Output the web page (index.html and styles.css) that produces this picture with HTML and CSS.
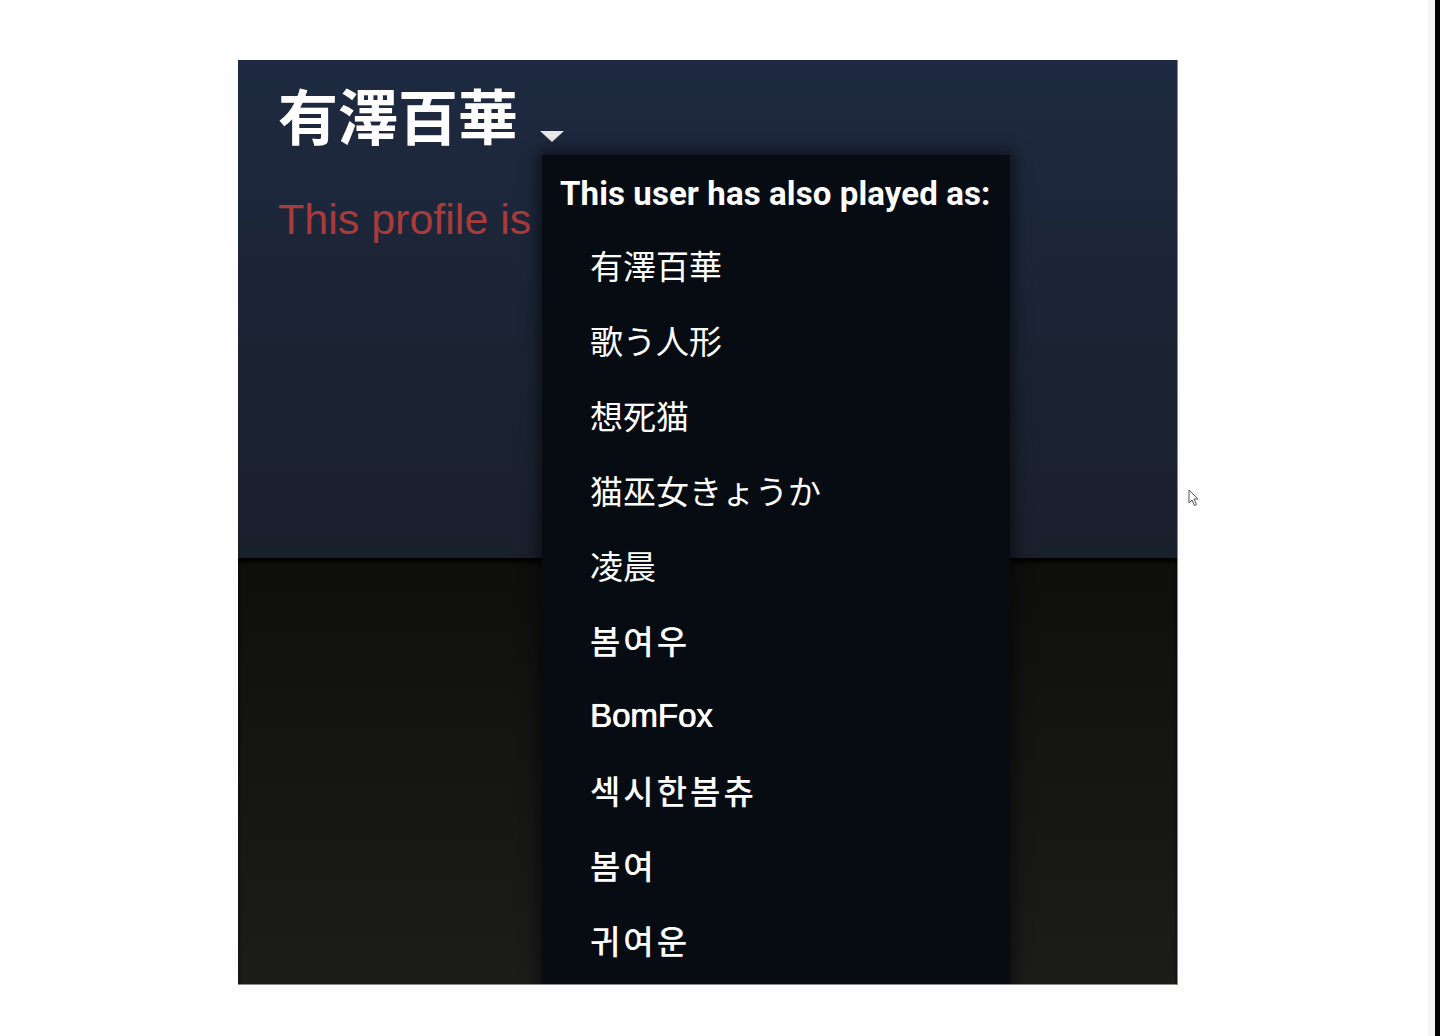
FILE: index.html
```html
<!DOCTYPE html>
<html lang="en">
<head>
    <meta charset="UTF-8">
    <meta name="viewport" content="width=device-width, initial-scale=1.0">
    <title>Profile</title>
    <link rel="stylesheet" href="styles.css">
</head>
<body>

    <div class="page">
        <div class="profile">
            <!-- Header with persona name -->
            <div class="profile-header">
                <div class="persona">
                    <span class="persona-name">有澤百華</span>
                    <span class="persona-arrow"></span>
                </div>
                <div class="private-note">This profile is private.</div>
            </div>

            <div class="profile-body"></div>

            <!-- Name history dropdown -->
            <div class="name-history">
                <div class="name-history-title">This user has also played as:</div>
                <ul class="name-list">
                    <li>有澤百華</li>
                    <li>歌う人形</li>
                    <li>想死猫</li>
                    <li>猫巫女きょうか</li>
                    <li>凌晨</li>
                    <li lang="ko">봄여우</li>
                    <li class="latin">BomFox</li>
                    <li lang="ko">섹시한봄츄</li>
                    <li lang="ko">봄여</li>
                    <li lang="ko">귀여운</li>
                </ul>
            </div>
        </div>

        <svg class="cursor" width="12" height="18" viewBox="0 0 12 18">
            <path d="M1 1 L1 14 L4 11 L6.5 16.5 L8.5 15.5 L6 10 L10 10 Z" fill="#fff" stroke="#555" stroke-width="1"/>
        </svg>
    </div>

    <div class="side-strip"></div>

</body>
</html>
```

FILE: styles.css
```css
html, body {
    margin: 0;
    height: 100%;
}
body {
    display: flex;
    background-color: #fdfefd;
    font-family: "Liberation Sans", Arial, "Noto Sans CJK JP", sans-serif;
    overflow: hidden;
}
.page {
    flex: 1;
    position: relative;
    padding: 60px 0 0 238px;
}
.side-strip {
    width: 12px;
    background: linear-gradient(to right, #f4f4f5 7px, #000 7px);
}
.profile {
    position: relative;
    width: 940px;
    height: 925px;
    display: flex;
    flex-direction: column;
    overflow: hidden;
    border-right: 1px solid #8a8a88;
    border-bottom: 1px solid #8a8a88;
    box-sizing: border-box;
}
.profile-header {
    height: 498px;
    flex-shrink: 0;
    padding: 14px 40px 0;
    box-sizing: border-box;
    background: linear-gradient(to bottom, #1e2a41 0%, #1b2333 60%, #1a1f2c 100%);
}
.persona {
    display: flex;
    align-items: flex-end;
    height: 80px;
}
.persona-name {
    font-family: "Noto Sans CJK JP", sans-serif;
    font-size: 60px;
    font-weight: 700;
    line-height: 80px;
    color: #fff;
}
.persona-arrow {
    width: 0;
    height: 0;
    margin: 0 0 12px 22px;
    border-left: 12px solid transparent;
    border-right: 12px solid transparent;
    border-top: 11px solid #e8e8e8;
}
/* the rest of the sentence sits under the dropdown */
.private-note {
    margin-top: 41px;
    width: 264px;
    white-space: nowrap;
    overflow: hidden;
    font-size: 43px;
    color: #a93b3b;
}
.profile-body {
    flex: 1;
    background: linear-gradient(to bottom, #0e0f0d 0%, #151614 50%, #1c1d1b 100%);
    box-shadow: inset 0 5px 5px -1px #000;
}
.name-history {
    position: absolute;
    left: 304px;
    top: 95px;
    width: 468px;
    bottom: -20px;
    padding: 19px 0 0 18px;
    box-sizing: border-box;
    background-color: #070b12;
    box-shadow: 0 0 14px 4px rgba(0, 0, 0, 0.55);
}
.name-history-title {
    font-family: Roboto, sans-serif;
    font-weight: 700;
    font-size: 33px;
    letter-spacing: 0.1px;
    line-height: 40px;
    color: #fff;
}
.name-list {
    list-style: none;
    margin: 14px 0 0;
    padding: 0 0 0 30px;
}
.name-list li {
    height: 75px;
    line-height: 75px;
    font-family: "Noto Sans CJK JP", sans-serif;
    font-size: 33px;
    color: #fff;
}
.name-list li[lang="ko"] {
    font-family: "Noto Sans CJK KR", sans-serif;
    font-weight: 500;
    letter-spacing: 3px;
}
.name-list li.latin {
    font-family: "Liberation Sans", Arial, sans-serif;
    text-shadow: 0 0 0.7px #fff, 0.5px 0 0 #fff;
}
.cursor {
    position: absolute;
    left: 1188px;
    top: 489px;
}
```
